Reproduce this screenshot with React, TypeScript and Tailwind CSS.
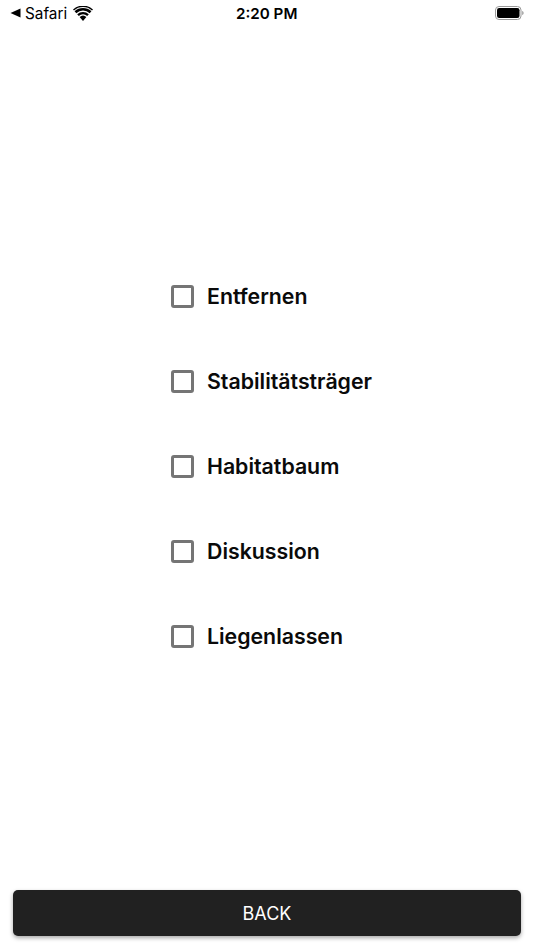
const OPTIONS = ["Entfernen", "Stabilitätsträger", "Habitatbaum", "Diskussion", "Liegenlassen"];

const StatusBar = () => (
  <div className="relative flex h-[27px] items-center justify-between pl-[10px] pr-[10px] text-black">
    <div className="flex items-center">
      <svg width="11" height="10" viewBox="0 0 11 10" className="mr-[4px]">
        <path d="M0.5 5 L10.5 0.5 V9.5 Z" fill="#000" />
      </svg>
      <span className="text-[15.3px] leading-none">Safari</span>
      <svg width="20" height="15" viewBox="0 0 20 15" className="ml-[6px]">
        <path d="M10 15 L6.6 11 A5 5 0 0 1 13.4 11 Z" fill="#000" />
        <path d="M4.2 8.2 L5.8 10 A6.2 6.2 0 0 1 14.2 10 L15.8 8.2 A8.6 8.6 0 0 0 4.2 8.2 Z" fill="#000" />
        <path d="M1.6 5.3 L3.3 7.2 A10 10 0 0 1 16.7 7.2 L18.4 5.3 A12.6 12.6 0 0 0 1.6 5.3 Z" fill="#000" />
        <path d="M0 3.4 L1 4.5 A13.4 13.4 0 0 1 19 4.5 L20 3.4 A15 15 0 0 0 0 3.4 Z" fill="#000" />
      </svg>
    </div>
    <span className="absolute left-[236px] top-[5px] text-[15.2px] font-semibold leading-[18px]">2:20 PM</span>
    <svg width="29" height="14" viewBox="0 0 29 14" className="mb-[1px]">
      <rect x="0.5" y="0.5" width="25.5" height="13" rx="3.5" fill="none" stroke="#9a9a9a" />
      <rect x="2" y="2" width="22.5" height="10" rx="2.2" fill="#000" />
      <path d="M27.2 5 C28.2 5.3 28.6 6 28.6 7 C28.6 8 28.2 8.7 27.2 9 Z" fill="#9a9a9a" />
    </svg>
  </div>
);

export default function App() {
  return (
    <div className="flex h-[950px] flex-col bg-white font-['Inter','Liberation_Sans',sans-serif]">
      <StatusBar />
      <div className="flex-1 pl-[171px] pt-[227px]">
        {OPTIONS.map((option) => (
          <label key={option} className="flex h-[85px] items-center gap-[13px]">
            <span className="h-[23px] w-[23px] rounded-[3px] border-[3px] border-[#757575] bg-white" />
            <span className="text-[21.3px] font-semibold leading-none text-[#0a0a0a]">{option}</span>
          </label>
        ))}
      </div>
      <div className="px-[13px] pb-[14px]">
        <button className="flex h-[46px] w-full items-center justify-center rounded-[5px] bg-[#212121] text-[18px] text-white shadow-[0_2px_4px_rgba(0,0,0,0.35)]">
          BACK
        </button>
      </div>
    </div>
  );
}
